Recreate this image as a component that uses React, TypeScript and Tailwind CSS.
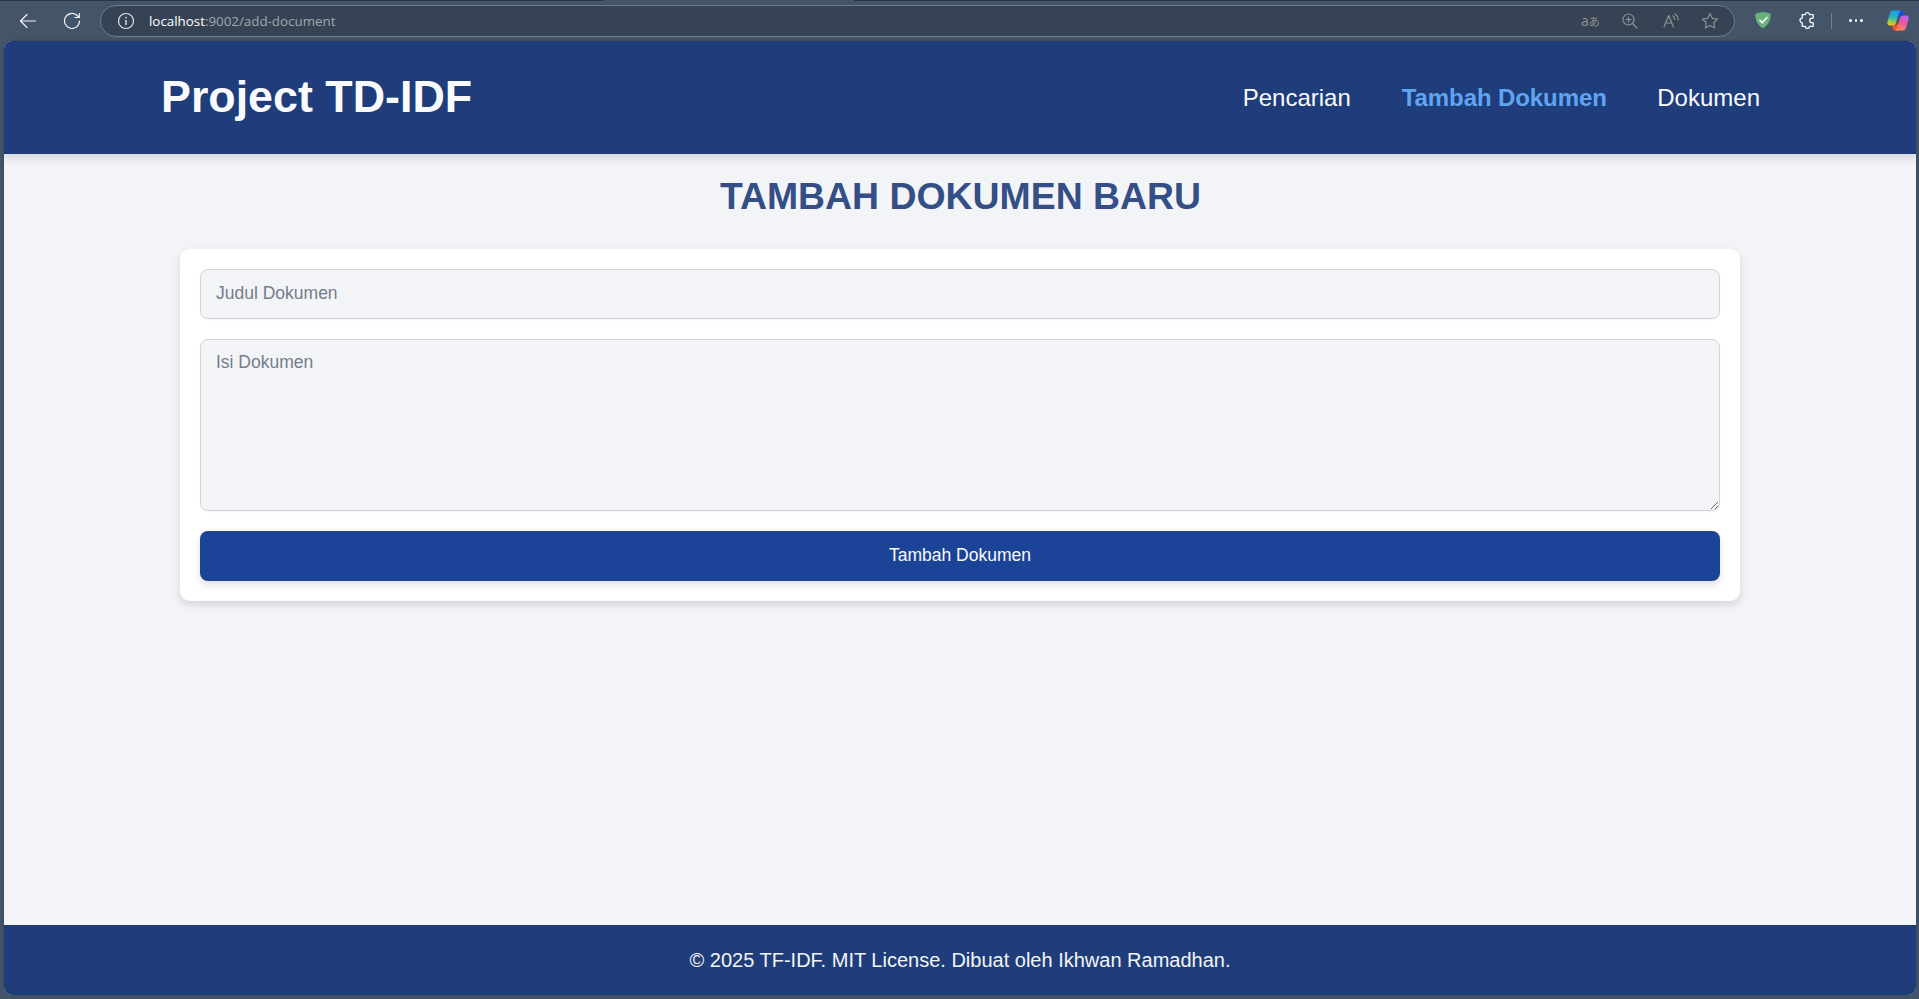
import React from "react";

const navItems = [
  { label: "Pencarian", active: false },
  { label: "Tambah Dokumen", active: true },
  { label: "Dokumen", active: false },
];

function BackIcon() {
  return (
    <svg width="18" height="16" viewBox="0 0 18 16" fill="none" stroke="#f3f4f6" strokeWidth="1.2" strokeLinecap="round" strokeLinejoin="round">
      <path d="M16.5 8H1.5M8 1.5L1.5 8L8 14.5" />
    </svg>
  );
}

function ReloadIcon() {
  return (
    <svg width="18" height="18" viewBox="0 0 18 18" fill="none" stroke="#f3f4f6" strokeWidth="1.2" strokeLinecap="round" strokeLinejoin="round">
      <path d="M16.5 9A7.5 7.5 0 1 1 13.9 3.3L16 5.3M16.3 1.5V5.5H11.8" />
    </svg>
  );
}

function InfoIcon() {
  return (
    <svg width="18" height="18" viewBox="0 0 18 18" fill="none" stroke="#e2e5e9" strokeWidth="1.2">
      <circle cx="9" cy="9" r="7.5" />
      <path d="M9 8V13" strokeWidth="1.4" />
      <circle cx="9" cy="5.6" r="0.9" fill="#e2e5e9" stroke="none" />
    </svg>
  );
}

function ZoomIcon() {
  return (
    <svg width="16" height="16" viewBox="0 0 16 16" fill="none" stroke="#8f9192" strokeWidth="1.2" strokeLinecap="round">
      <circle cx="6.5" cy="6.5" r="5.5" />
      <path d="M10.5 10.5L15 15M6.5 4V9M4 6.5H9" />
    </svg>
  );
}

function ReadAloudIcon() {
  return (
    <svg width="16" height="16" viewBox="0 0 16 16" fill="none" stroke="#8f9192" strokeWidth="1.2" strokeLinecap="round" strokeLinejoin="round">
      <path d="M1 14L5.7 2.5L10.5 14M2.5 10H9" />
      <path d="M9.5 2.8Q11.7 3.8 11.8 6.5M11.8 1Q15 2.8 15.2 6.8" />
    </svg>
  );
}

function StarIcon() {
  return (
    <svg width="18" height="18" viewBox="0 0 18 18" fill="none" stroke="#8f9192" strokeWidth="1.2" strokeLinejoin="round">
      <path d="M9 1.5L11.3 6.3L16.5 7L12.7 10.7L13.6 16L9 13.5L4.4 16L5.3 10.7L1.5 7L6.7 6.3Z" />
    </svg>
  );
}

function ShieldIcon() {
  return (
    <svg width="16" height="17" viewBox="0 0 16 17" fill="none">
      <path d="M8 0.3C5.5 0.3 2.5 0.9 0.3 2C0.3 4.5 0.2 11.5 8 16.6C15.8 11.5 15.7 4.5 15.7 2C13.5 0.9 10.5 0.3 8 0.3Z" fill="#67b279" />
      <path d="M4.5 7.8L7.3 10.8L12.3 5" stroke="#ffffff" strokeWidth="1.6" />
    </svg>
  );
}

function ExtensionIcon() {
  return (
    <svg width="16" height="17" viewBox="0 0 16 17" fill="none" stroke="#f3f4f6" strokeWidth="1.3" strokeLinejoin="round">
      <path d="M3.2 2.6H6.4A2 1.9 0 0 1 10.4 2.6H14.2V6.2H13A2.1 2.1 0 0 0 13 10.6H14.2V14.4H10.4A2 1.9 0 0 1 6.4 14.4H3.2V10.6A2.2 2.2 0 0 1 3.2 6.2Z" />
    </svg>
  );
}

function CopilotIcon() {
  return (
    <svg width="22" height="21" viewBox="0 0 22 21">
      <defs>
        <linearGradient id="cpLeft" x1="0.5" y1="0" x2="0.3" y2="1">
          <stop offset="0" stopColor="#1a9bef" />
          <stop offset="0.45" stopColor="#27b5b8" />
          <stop offset="0.8" stopColor="#a5cf35" />
          <stop offset="1" stopColor="#f5c518" />
        </linearGradient>
        <linearGradient id="cpRight" x1="0.7" y1="0" x2="0.4" y2="1">
          <stop offset="0" stopColor="#b765f2" />
          <stop offset="0.5" stopColor="#f0569c" />
          <stop offset="1" stopColor="#ff8a55" />
        </linearGradient>
      </defs>
      <path d="M10 0.5H14.5Q16.2 0.5 16.7 2.2L17.7 6H13.5Q11.8 6 11 8.5Z" fill="#1b4fd0" />
      <path d="M12 20.5H8Q6.3 20.5 5.8 18.8L5 15H8.5Q10.2 15 11 12.5Z" fill="#f4512c" />
      <path d="M6 0.5H14Q12.6 0.7 12 2.7L9 13Q8.2 15.5 6 15.5H2.5Q-0.3 15.5 0.5 11.5L3 3Q3.8 0.5 6 0.5Z" fill="url(#cpLeft)" />
      <path d="M16 20.5H8Q9.4 20.3 10 18.3L13 8Q13.8 5.5 16 5.5H19.5Q22.3 5.5 21.5 9.5L19 18Q18.2 20.5 16 20.5Z" fill="url(#cpRight)" />
    </svg>
  );
}

function BrowserBar() {
  return (
    <div className="flex h-[41px] shrink-0 flex-col">
      <div className="flex h-px shrink-0 justify-between">
        <div className="w-[603px] bg-[#2b3442]" />
        <div className="w-[1065px] bg-[#2b3442]" />
      </div>
      <div className="flex h-10 items-center pb-px pl-[19px] pr-[10px]">
        <BackIcon />
        <div className="ml-[26px]">
          <ReloadIcon />
        </div>
        <div className="ml-[19px] flex h-8 w-[1635px] items-center rounded-full border border-[#6e7b88] bg-[#364354] pl-[16px] pr-[15px]">
          <InfoIcon />
          <div className="ml-[14px] flex-1 font-['Open_Sans',sans-serif] text-[13.35px] leading-5 text-[#a3a6aa]">
            <span className="text-white">localhost</span>:9002/add-document
          </div>
          <div className="flex items-center">
            <span className="mr-px flex w-[18px] items-baseline whitespace-nowrap font-['Open_Sans','Noto_Sans_CJK_JP',sans-serif] text-[14px] leading-4 text-[#8f9192]">
              a<span className="font-['Noto_Sans_CJK_JP',sans-serif] text-[11px]">あ</span>
            </span>
            <div className="ml-[22px] flex"><ZoomIcon /></div>
            <div className="ml-[25px] flex"><ReadAloudIcon /></div>
            <div className="ml-[22px] flex"><StarIcon /></div>
          </div>
        </div>
        <div className="ml-[20px]"><ShieldIcon /></div>
        <div className="ml-[28px]"><ExtensionIcon /></div>
        <div className="ml-[16px] h-4 w-px bg-[#76818d]" />
        <div className="ml-[17px] flex gap-[3px]">
          <span className="size-[2.5px] rounded-full bg-white" />
          <span className="size-[2.5px] rounded-full bg-white" />
          <span className="size-[2.5px] rounded-full bg-white" />
        </div>
        <div className="ml-auto"><CopilotIcon /></div>
      </div>
    </div>
  );
}

export default function App() {
  return (
    <div className="flex h-[999px] w-[1919px] flex-col overflow-hidden bg-[#445469] font-['Liberation_Sans',Arial,sans-serif]">
      <BrowserBar />
      <div className="ml-1 mr-[3px] flex h-[954px] flex-col overflow-hidden rounded-lg bg-[#f3f4f8] shadow-[0_0_3px_rgba(0,0,0,0.25)]">
        <header className="z-10 flex h-[113px] shrink-0 items-center justify-between bg-[#1f3d7a] pl-[157px] pr-[156px] shadow-[0_4px_8px_rgba(0,0,0,0.13)]">
          <h1 className="pb-[2px] text-[44.8px] font-bold leading-[67px] text-[#f9fafb]">Project TD-IDF</h1>
          <nav className="flex gap-[50.5px] text-2xl">
            {navItems.map((item) => (
              <a key={item.label} href="#" className={item.active ? "pl-[0.5px] font-bold tracking-[-0.09px] text-[#5fa5f1]" : "text-[#f9fafb]"}>
                {item.label}
              </a>
            ))}
          </nav>
        </header>
        <main className="flex flex-1 flex-col px-44 pt-[14px]">
          <h2 className="pl-px text-center text-[37.4px] font-bold leading-[56px] text-[#334f86]">TAMBAH DOKUMEN BARU</h2>
          <form className="mt-[25px] flex h-[352px] flex-col gap-5 rounded-[10px] bg-white p-5 shadow-[0_4px_8px_rgba(0,0,0,0.13)]">
            <input
              type="text"
              placeholder="Judul Dokumen"
              className="h-[50px] shrink-0 rounded-lg border border-[#d1d5db] bg-[#f3f4f8] px-[15px] pb-px text-[17.5px] shadow-[0_1px_2px_rgba(0,0,0,0.05)] outline-none placeholder:text-[#757d8b]"
            />
            <textarea
              placeholder="Isi Dokumen"
              className="h-[172px] shrink-0 rounded-lg border border-[#d1d5db] bg-[#f3f4f8] px-[15px] py-[11px] text-[17.5px] leading-[22px] shadow-[0_1px_2px_rgba(0,0,0,0.05)] outline-none placeholder:text-[#757d8b]"
            />
            <button type="button" className="h-[50px] shrink-0 rounded-lg bg-[#1b4398] pb-[2px] text-[17.5px] text-[#f9fafb] shadow-[0_4px_8px_rgba(0,0,0,0.13)]">
              Tambah Dokumen
            </button>
          </form>
        </main>
        <footer className="flex h-[70px] shrink-0 items-center justify-center bg-[#1f3d7a] text-xl text-[#f3f4f6]">
          © 2025 TF-IDF. MIT License. Dibuat oleh Ikhwan Ramadhan.
        </footer>
      </div>
    </div>
  );
}
